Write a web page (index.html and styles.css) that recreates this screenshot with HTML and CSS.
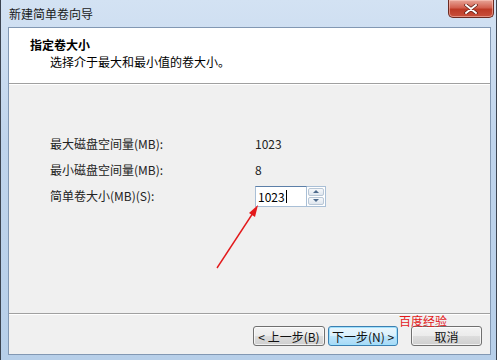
FILE: index.html
```html
<!DOCTYPE html>
<html>
<head>
  <meta charset="utf-8">
  <meta name="viewport" content="width=device-width">
  <title>新建简单卷向导</title>
  <link rel="stylesheet" href="styles.css">
</head>
<body>
  <div class="window">
    <div class="titlebar">
      <span class="title">新建简单卷向导</span>
      <div class="close-btn">
        <svg width="14" height="10" viewBox="0 0 14 10">
          <path d="M2 1 L12 9 M12 1 L2 9" stroke="#5a1a12" stroke-width="3.4" stroke-linecap="round"/>
          <path d="M2 1 L12 9 M12 1 L2 9" stroke="#fff" stroke-width="2" stroke-linecap="round"/>
        </svg>
      </div>
    </div>

    <div class="client">
      <div class="header">
        <div class="header-title">指定卷大小</div>
        <div class="header-sub">选择介于最大和最小值的卷大小。</div>
      </div>

      <div class="content">
        <div class="form-grid">
          <div class="label">最大磁盘空间量(MB):</div>
          <div class="value">1023</div>
          <div class="label">最小磁盘空间量(MB):</div>
          <div class="value">8</div>
          <div class="label">简单卷大小(MB)(S):</div>
          <div class="spin">
            <div class="spin-input">1023<span class="caret"></span></div>
            <div class="spin-buttons">
              <div class="spin-btn"><span class="tri-up"></span></div>
              <div class="spin-btn"><span class="tri-down"></span></div>
            </div>
          </div>
        </div>
      </div>

      <div class="footer">
        <button class="btn btn-back">&lt; 上一步(B)</button>
        <button class="btn btn-next">下一步(N) &gt;</button>
        <button class="btn btn-cancel">取消</button>
      </div>
    </div>

    <!-- annotation overlays -->
    <svg class="arrow" width="497" height="360" viewBox="0 0 497 360">
      <line x1="217" y1="268" x2="253" y2="213" stroke="#e3191b" stroke-width="1.4"/>
      <polygon points="258,205 255,217 249,213" fill="#e3191b"/>
    </svg>
    <div class="watermark">百度经验</div>
  </div>
</body>
</html>
```

FILE: styles.css
```css
body {
  margin: 0;
  padding: 0;
  font-family: "Noto Sans CJK SC", "Liberation Sans", sans-serif;
  font-size: 12px;
  color: #000;
  background: #fff;
}

.window {
  position: relative;
  width: 497px;
  height: 360px;
  box-sizing: border-box;
  display: flex;
  flex-direction: column;
  padding: 0 5px 5px 7px;
  background: linear-gradient(#d3e2f3, #bfd4ec 40%, #b7cfe9);
  border-left: 1px solid #3c4450;
  border-right: 1px solid #3c4450;
}

.titlebar {
  height: 27px;
  display: flex;
  align-items: flex-start;
  justify-content: space-between;
}

.title {
  margin-top: 6px;
  margin-left: 1px;
  line-height: 16px;
  color: #1a1a1a;
}

.close-btn {
  width: 46px;
  height: 18px;
  box-sizing: border-box;
  margin-right: -3px;
  border: 1px solid #6b2a22;
  border-top: none;
  border-radius: 0 0 5px 5px;
  background: linear-gradient(#e8a598, #d2604f 45%, #bd3a26 55%, #c8503c);
  display: flex;
  align-items: center;
  justify-content: center;
  box-shadow: inset 0 0 0 1px rgba(255, 210, 200, 0.5);
}

.client {
  flex: 1;
  display: flex;
  flex-direction: column;
  border: 1px solid #8298b3;
  background: #f0f0f0;
}

.header {
  height: 56px;
  box-sizing: border-box;
  background: #fff;
  border-bottom: 1px solid #a0a0a0;
  box-shadow: 0 1px 0 #fff;
  padding: 9px 0 0 21px;
}

.header-title {
  font-weight: bold;
  line-height: 16px;
}

.header-sub {
  margin-top: 1px;
  padding-left: 20px;
  line-height: 16px;
}

.content {
  flex: 1;
  padding: 47px 0 0 41px;
  border-bottom: 1px solid #a0a0a0;
  box-shadow: 0 1px 0 #fff;
}

.form-grid {
  display: grid;
  grid-template-columns: 205px auto;
  grid-auto-rows: 26px;
  align-items: center;
}

.label,
.value {
  line-height: 16px;
  color: #222;
}

.spin {
  display: flex;
  height: 21px;
}

.spin-input {
  width: 52px;
  box-sizing: border-box;
  border: 1px solid #a9bfd6;
  border-top-color: #5c7fa8;
  background: #fff;
  padding: 1px 0 0 2px;
  line-height: 18px;
  display: flex;
  align-items: center;
}

.caret {
  display: inline-block;
  width: 1px;
  height: 13px;
  background: #000;
  margin-left: 1px;
}

.spin-buttons {
  width: 16px;
  display: flex;
  flex-direction: column;
  border: 1px solid #a9bfd6;
  border-left: none;
  background: #fff;
  padding: 1px;
  gap: 1px;
}

.spin-btn {
  flex: 1;
  border: 1px solid #b9c7d6;
  border-radius: 2px;
  background: linear-gradient(#f6f8fb, #dfe6ee);
  display: flex;
  align-items: center;
  justify-content: center;
}

.tri-up,
.tri-down {
  width: 0;
  height: 0;
  border-left: 3px solid transparent;
  border-right: 3px solid transparent;
}

.tri-up {
  border-bottom: 3px solid #4d6a8c;
}

.tri-down {
  border-top: 3px solid #4d6a8c;
}

.footer {
  height: 40px;
  box-sizing: border-box;
  display: flex;
  justify-content: flex-end;
  align-items: flex-start;
  padding: 12px 8px 0 0;
}

.btn {
  height: 20px;
  box-sizing: border-box;
  padding: 0;
  font-family: inherit;
  font-size: 12px;
  color: #111;
  border: 1px solid #707070;
  border-radius: 3px;
  background: linear-gradient(#f3f3f3, #ebebeb 50%, #dddddd 50%, #cfcfcf);
  box-shadow: inset 0 0 0 1px rgba(255, 255, 255, 0.7);
}

.btn-back {
  width: 72px;
}

.btn-next {
  width: 70px;
  margin-left: 3px;
  border-color: #3c7fb1;
  background: linear-gradient(#eaf6fd, #d9f0fc 50%, #bee6fd 50%, #a7d9f5);
  box-shadow: inset 0 0 0 1px #9fe0fc;
}

.btn-cancel {
  width: 71px;
  margin-left: 13px;
}

.arrow {
  position: absolute;
  left: -1px;
  top: 0;
  pointer-events: none;
}

.watermark {
  position: absolute;
  left: 398px;
  top: 313px;
  color: #e3191b;
  font-size: 12px;
  line-height: 16px;
}
```
